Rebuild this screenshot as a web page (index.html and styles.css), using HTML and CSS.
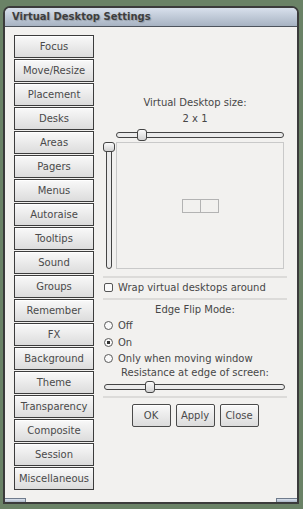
FILE: index.html
```html
<!DOCTYPE html>
<html lang="en">
<head>
  <meta charset="UTF-8" />
  <meta name="viewport" content="width=device-width, initial-scale=1" />
  <title>Virtual Desktop Settings</title>
  <link rel="stylesheet" href="styles.css">
</head>
<body>
  <div class="window">
    <div class="titlebar">Virtual Desktop Settings</div>

    <div class="content">
      <nav class="categories">
        <button class="cat">Focus</button>
        <button class="cat">Move/Resize</button>
        <button class="cat">Placement</button>
        <button class="cat">Desks</button>
        <button class="cat">Areas</button>
        <button class="cat">Pagers</button>
        <button class="cat">Menus</button>
        <button class="cat">Autoraise</button>
        <button class="cat">Tooltips</button>
        <button class="cat">Sound</button>
        <button class="cat">Groups</button>
        <button class="cat">Remember</button>
        <button class="cat">FX</button>
        <button class="cat">Background</button>
        <button class="cat">Theme</button>
        <button class="cat">Transparency</button>
        <button class="cat">Composite</button>
        <button class="cat">Session</button>
        <button class="cat">Miscellaneous</button>
      </nav>

      <section class="panel">
        <p class="caption">Virtual Desktop size:</p>
        <p class="caption">2 x 1</p>

        <div class="desk-grid">
          <div class="hslider">
            <span class="track"></span>
            <span class="thumb" style="left: 21px"></span>
          </div>
          <div class="vslider">
            <span class="track"></span>
            <span class="thumb" style="top: 0px"></span>
          </div>
          <div class="preview">
            <div class="desks"><span></span><span></span></div>
          </div>
        </div>

        <hr class="sep sep-a">
        <label class="option check"><span class="box"></span>Wrap virtual desktops around</label>
        <hr class="sep sep-b">

        <p class="caption mode">Edge Flip Mode:</p>
        <label class="option radio"><span class="dot"></span>Off</label>
        <label class="option radio on"><span class="dot"></span>On</label>
        <label class="option radio"><span class="dot"></span>Only when moving window</label>

        <p class="caption resist">Resistance at edge of screen:</p>
        <div class="hslider resist-slider">
          <span class="track"></span>
          <span class="thumb" style="left: 41px"></span>
        </div>
        <hr class="sep sep-c">

        <div class="actions">
          <button class="btn">OK</button>
          <button class="btn">Apply</button>
          <button class="btn">Close</button>
        </div>
      </section>
    </div>

    <div class="frame-bottom">
      <span class="grip grip-left"></span>
      <span class="grip grip-right"></span>
    </div>
  </div>
</body>
</html>
```

FILE: styles.css
```css
body {
  margin: 0;
  background: #6a8266;
  font-family: "DejaVu Sans", sans-serif;
  font-size: 10px;
  color: #474747;
}

.window {
  width: 292px;
  margin: 6px 0 0 3px;
  border: 2px solid #3b3b3b;
  border-radius: 7px 7px 0 0;
  background: #f2f1ef;
  overflow: hidden;
}

.titlebar {
  height: 18px;
  line-height: 18px;
  padding-left: 7px;
  font-weight: bold;
  color: #3e3e3e;
  text-shadow: 1px 1px 1px rgba(0, 0, 0, 0.2);
  background: linear-gradient(#d8e0ec, #a7b3c2);
  border-bottom: 1px solid #4d535c;
}

.content {
  display: flex;
  gap: 9px;
  padding: 8px 10px 8px 9px;
}

.categories {
  display: flex;
  flex-direction: column;
  gap: 1px;
  width: 80px;
}

.cat,
.btn {
  height: 23px;
  padding: 0;
  border: 1px solid #3c3c3c;
  background: linear-gradient(#f9f9f9, #dcdcdc);
  font: inherit;
  color: #4a4a4a;
  box-shadow: inset 0 1px 0 #ffffff;
}

.panel {
  width: 184px;
  padding-top: 60px;
  display: flex;
  flex-direction: column;
}

.caption {
  margin: 0;
  text-align: center;
  line-height: 16px;
}

.desk-grid {
  display: grid;
  grid-template-columns: 13px 168px;
  grid-template-rows: 12px 127px;
  row-gap: 1px;
  margin-top: 2px;
}

.desk-grid .hslider {
  grid-column: 2;
}

.hslider,
.vslider {
  position: relative;
}

.hslider .track {
  position: absolute;
  left: 0;
  right: 0;
  top: 3px;
  height: 6px;
  box-sizing: border-box;
  border: 1px solid #444;
  border-radius: 4px;
  background: #ebebeb;
}

.vslider .track {
  position: absolute;
  left: 3px;
  top: 0;
  bottom: 0;
  width: 6px;
  box-sizing: border-box;
  border: 1px solid #444;
  border-radius: 4px;
  background: #ebebeb;
}

.thumb {
  position: absolute;
  box-sizing: border-box;
  border: 1px solid #444;
  border-radius: 3px;
  background: linear-gradient(#fbfbfb, #d2d2d2);
}

.hslider .thumb {
  top: 0;
  width: 10px;
  height: 12px;
}

.vslider .thumb {
  left: 0;
  width: 12px;
  height: 10px;
}

.preview {
  display: flex;
  align-items: center;
  justify-content: center;
  border: 1px solid #c9c9c9;
}

.desks {
  display: flex;
  border: 1px solid #b3b3b3;
}

.desks span {
  width: 17px;
  height: 12px;
}

.desks span + span {
  border-left: 1px solid #b3b3b3;
}

.sep {
  height: 2px;
  margin: 0;
  border: 0;
  background: #dcdbd9;
}

.sep-a {
  margin-top: 7px;
}

.sep-b,
.sep-c {
  margin-top: 3px;
}

.option {
  display: flex;
  align-items: center;
  gap: 5px;
  height: 16px;
  padding-left: 1px;
}

.check {
  margin-top: 1px;
}

.box {
  width: 9px;
  height: 9px;
  box-sizing: border-box;
  border: 1px solid #555;
  border-radius: 2px;
  background: #fafafa;
}

.dot {
  width: 9px;
  height: 9px;
  box-sizing: border-box;
  border: 1px solid #5a5a5a;
  border-radius: 50%;
  background: #fafafa;
}

.radio.on {
  margin-top: 1px;
}

.radio.on .dot {
  background: radial-gradient(circle, #333 0 1.5px, #fafafa 2px);
}

.mode {
  margin-top: 2px;
  line-height: 15px;
}

.resist {
  line-height: 14px;
}

.resist-slider {
  height: 12px;
  margin: 1px 2px 0 1px;
}

.actions {
  display: flex;
  justify-content: center;
  gap: 5px;
  margin-top: 6px;
}

.btn {
  width: 39px;
  border-color: #4a4a4a;
  border-radius: 2px;
}

.frame-bottom {
  display: flex;
  justify-content: space-between;
  height: 4px;
}

.grip {
  width: 21px;
  box-sizing: border-box;
  border-top: 1px solid #6f7b8c;
  background: linear-gradient(#dbe3ee, #aab6c6);
}

.grip-left {
  border-right: 1px solid #6f7b8c;
}

.grip-right {
  border-left: 1px solid #6f7b8c;
}
```
